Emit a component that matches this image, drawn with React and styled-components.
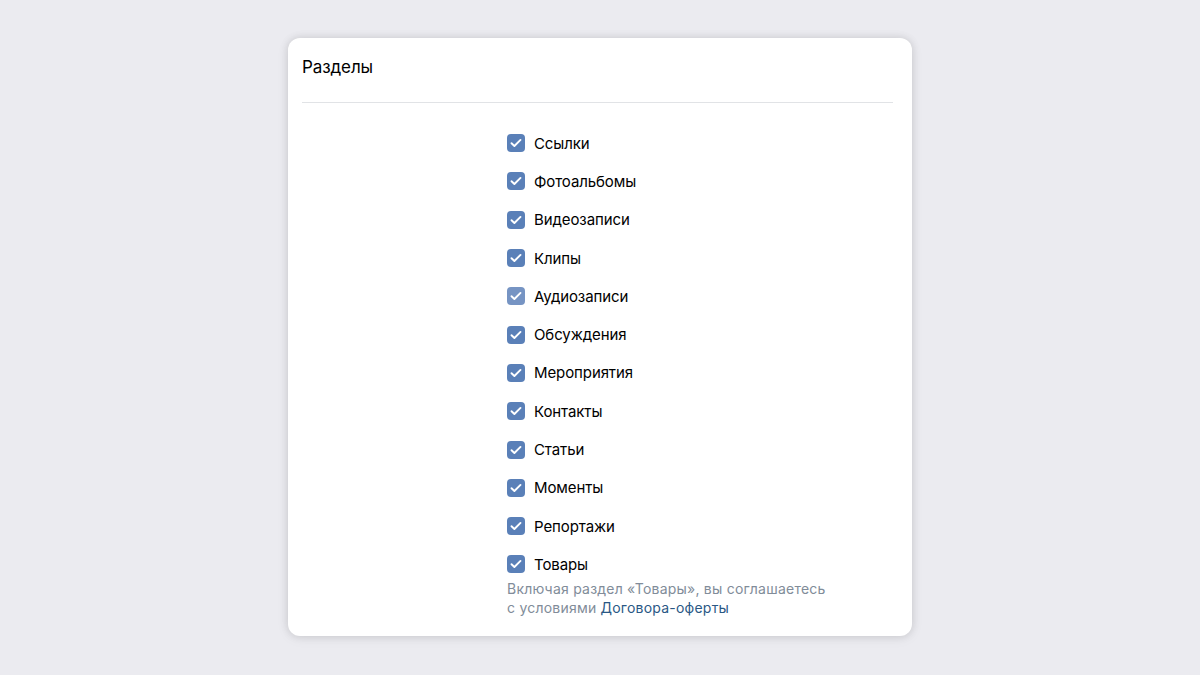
import React from 'react';
import styled, { createGlobalStyle } from 'styled-components';

const Global = createGlobalStyle`
  html, body {
    margin: 0;
    padding: 0;
    background: #ebebf0;
  }
  body {
    font-family: Inter, "Noto Sans", sans-serif;
    -webkit-font-smoothing: antialiased;
  }
`

const Page = styled.div`
  width: 1200px;
  height: 675px;
  display: flex;
  align-items: center;
  justify-content: center;
`
const Card = styled.div`
  width: 624px;
  height: 598px;
  margin-top: -1px;
  box-sizing: border-box;
  background: #fff;
  border-radius: 12px;
  box-shadow: 0 0 8px rgba(0, 0, 0, 0.12), 0 2px 14px rgba(0, 0, 0, 0.06);
  padding: 0 19px 0 14px;
`
const Header = styled.div`
  height: 65px;
  box-sizing: border-box;
  padding-bottom: 7px;
  display: flex;
  align-items: center;
  border-bottom: 1px solid #e1e3e6;
  font-size: 17px;
  color: #000;
  letter-spacing: -0.1px;
`
const Body = styled.div`
  padding: 21px 0 0 205px;
`
const Row = styled.label`
  display: flex;
  align-items: center;
  height: 38.3px;
  font-size: 15px;
  color: #000;
  letter-spacing: -0.1px;
  cursor: pointer;
`
const Box = styled.span`
  width: 18px;
  height: 18px;
  border-radius: 4px;
  background: ${p => p.$light ? '#7694c3' : '#5a80b8'};
  display: flex;
  align-items: center;
  justify-content: center;
  margin-right: 9px;
  flex-shrink: 0;
`
const Note = styled.div`
  font-size: 14px;
  line-height: 19px;
  color: #818c99;
  margin-top: -5px;
  letter-spacing: 0.22px;
`
const Link = styled.a`
  color: #2a5885;
  text-decoration: none;
`

const items = [
  'Ссылки', 'Фотоальбомы', 'Видеозаписи', 'Клипы', 'Аудиозаписи', 'Обсуждения',
  'Мероприятия', 'Контакты', 'Статьи', 'Моменты', 'Репортажи', 'Товары',
]

const Check = () => (
  <svg width="12" height="10" viewBox="0 0 12 10" fill="none">
    <path d="M1.5 5.2 L4.4 8 L10.5 1.9" stroke="#fff" strokeWidth="1.9" strokeLinecap="round" strokeLinejoin="round" />
  </svg>
)

export default function App() {
  return (
    <Page>
      <Global />
      <Card>
        <Header>Разделы</Header>
        <Body>
          {items.map(name => (
            <Row key={name}>
              <Box $light={name === 'Аудиозаписи'}><Check /></Box>
              {name}
            </Row>
          ))}
          <Note>
            Включая раздел «Товары», вы соглашаетесь<br />
            с условиями <Link href="#">Договора-оферты</Link>
          </Note>
        </Body>
      </Card>
    </Page>
  )
}
